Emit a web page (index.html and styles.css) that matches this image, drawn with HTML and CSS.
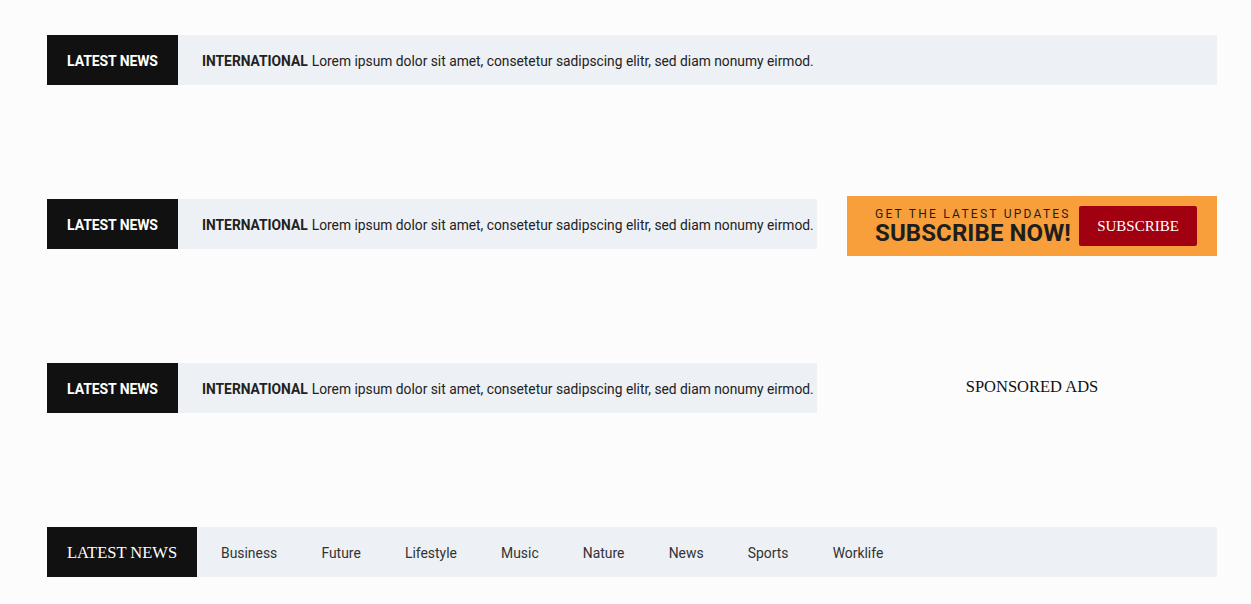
FILE: index.html
```html
<!DOCTYPE html>
<html>
<head>
<meta charset="utf-8">
<link rel="stylesheet" href="styles.css">
</head>
<body>
<div class="page">
  <section class="block block-1">
    <div class="ticker">
      <div class="ticker-label">LATEST NEWS</div>
      <div class="ticker-text"><strong>INTERNATIONAL</strong> Lorem ipsum dolor sit amet, consetetur sadipscing elitr, sed diam nonumy eirmod.</div>
    </div>
  </section>

  <section class="block block-2 row">
    <div class="col-main">
      <div class="ticker">
        <div class="ticker-label">LATEST NEWS</div>
        <div class="ticker-text"><strong>INTERNATIONAL</strong> Lorem ipsum dolor sit amet, consetetur sadipscing elitr, sed diam nonumy eirmod.</div>
      </div>
    </div>
    <div class="col-side">
      <div class="subscribe">
        <div class="subscribe-copy">
          <div class="subscribe-kicker">GET THE LATEST UPDATES</div>
          <div class="subscribe-title">SUBSCRIBE NOW!</div>
        </div>
        <button class="subscribe-btn">SUBSCRIBE</button>
      </div>
    </div>
  </section>

  <section class="block block-3 row">
    <div class="col-main">
      <div class="ticker">
        <div class="ticker-label">LATEST NEWS</div>
        <div class="ticker-text"><strong>INTERNATIONAL</strong> Lorem ipsum dolor sit amet, consetetur sadipscing elitr, sed diam nonumy eirmod.</div>
      </div>
    </div>
    <div class="col-side ads">SPONSORED ADS</div>
  </section>

  <section class="block block-4">
    <nav class="catbar">
      <div class="catbar-label">LATEST NEWS</div>
      <ul class="catbar-list">
        <li>Business</li>
        <li>Future</li>
        <li>Lifestyle</li>
        <li>Music</li>
        <li>Nature</li>
        <li>News</li>
        <li>Sports</li>
        <li>Worklife</li>
      </ul>
    </nav>
  </section>
</div>
</body>
</html>
```

FILE: styles.css
```css
* { box-sizing: border-box; }
html, body {
  margin: 0;
  padding: 0;
  background: #fcfcfd;
}
body {
  font-family: Roboto, "Liberation Sans", Arial, sans-serif;
  color: #222;
}
.page {
  width: 1170px;
  margin-left: 47px;
  padding-top: 35px;
}
.row {
  display: flex;
  gap: 30px;
}
.col-main { width: 770px; flex-shrink: 0; }
.col-side { width: 370px; flex-shrink: 0; }

.block-2 { margin-top: 111px; }
.block-2 .col-main { padding-top: 3px; }
.block-3 { margin-top: 107px; }
.block-4 { margin-top: 114px; }

.ticker {
  display: flex;
  height: 50px;
  background: #edf0f4;
  align-items: stretch;
}
.ticker-label {
  flex: 0 0 131px;
  background: #111;
  color: #fff;
  font-weight: 700;
  font-size: 14px;
  display: flex;
  align-items: center;
  justify-content: center;
  padding-top: 2px;
  letter-spacing: -0.1px;
}
.ticker-text {
  display: flex;
  align-items: center;
  padding-left: 24px;
  padding-top: 2px;
  font-size: 13.8px;
  color: #222;
  white-space: nowrap;
}
.ticker-text strong {
  font-weight: 700;
  margin-right: 4px;
}

.subscribe {
  height: 60px;
  background: #f89e3a;
  display: flex;
  align-items: center;
  padding: 0 20px 0 28px;
}
.subscribe-copy {
  flex: 1;
  display: flex;
  flex-direction: column;
  padding-top: 2px;
}
.subscribe-kicker {
  font-size: 12px;
  letter-spacing: 2.25px;
  line-height: 12px;
  color: #1e1e1e;
}
.subscribe-title {
  font-size: 24px;
  font-weight: 700;
  line-height: 26px;
  color: #1e1e1e;
  letter-spacing: 0.1px;
}
.subscribe-btn {
  width: 118px;
  height: 40px;
  border: 0;
  border-radius: 2px;
  background: #a0000f;
  color: #fff;
  font-family: "Liberation Serif", "Times New Roman", serif;
  font-size: 15px;
  padding: 0;
}

.ads {
  display: flex;
  align-items: center;
  justify-content: center;
  height: 48px;
  font-family: "Liberation Serif", "Times New Roman", serif;
  font-size: 16.5px;
  color: #111;
}

.catbar {
  display: flex;
  height: 50px;
  background: #edf0f4;
}
.catbar-label {
  flex: 0 0 150px;
  background: #111;
  color: #fff;
  font-family: "Liberation Serif", "Times New Roman", serif;
  font-size: 16.5px;
  display: flex;
  align-items: center;
  justify-content: center;
  padding-top: 1px;
}
.catbar-list {
  list-style: none;
  margin: 0;
  padding: 1px 0 0 24px;
  display: flex;
  align-items: center;
  gap: 44.2px;
}
.catbar-list li {
  font-size: 13.9px;
  font-weight: 400;
  color: #333;
}
```
